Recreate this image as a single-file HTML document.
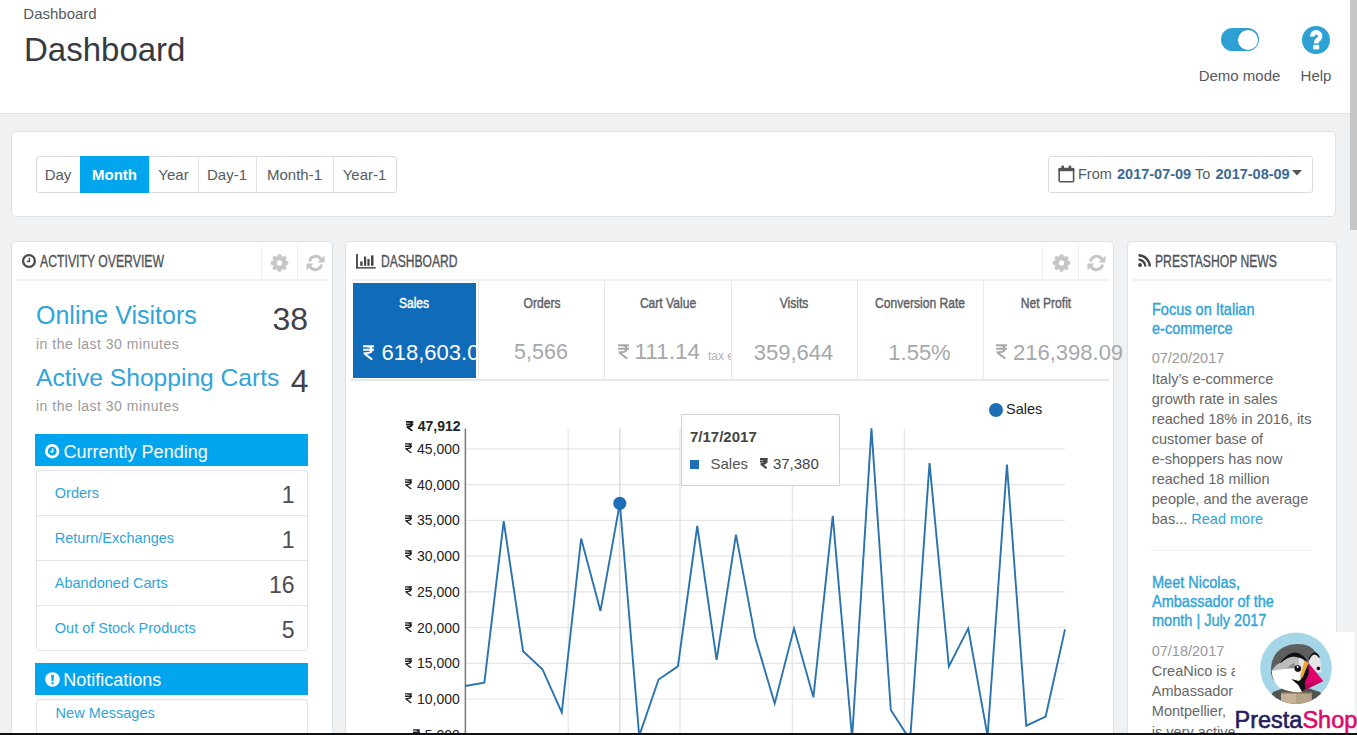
<!DOCTYPE html><html><head><meta charset="utf-8"><style>
*{margin:0;padding:0;box-sizing:border-box}
html,body{width:1357px;height:735px;overflow:hidden;background:#eff1f2;font-family:"Liberation Sans", sans-serif;position:relative}
</style></head><body>
<svg width="0" height="0" style="position:absolute"><defs>
<symbol id="ru" viewBox="0 0 10 14"><path d="M0 1.1H10M0 4.3H10M3 1.1Q7.9 1.1 7.9 4.4Q7.9 7.5 3.2 7.5H0.6M0.9 7.5L8.4 13.3" fill="none" stroke="currentColor" stroke-width="1.8"/></symbol>
<symbol id="rub" viewBox="0 0 10 14"><path d="M0 1.2H10M0 4.4H10M3 1.2Q7.7 1.2 7.7 4.5Q7.7 7.5 3.2 7.5H0.8M1.1 7.5L8.4 13.1" fill="none" stroke="currentColor" stroke-width="2.5"/></symbol>
</defs></svg>
<div style="position:absolute;left:0px;top:0px;width:1350px;height:114px;background:#fff;border-bottom:1px solid #e2e4e7;"></div>
<div style="position:absolute;top:5.90px;font-size:15px;line-height:15px;color:#555a60;font-weight:400;white-space:nowrap;left:23.30px;">Dashboard</div>
<div style="position:absolute;top:33.37px;font-size:33px;line-height:33px;color:#363a41;font-weight:400;white-space:nowrap;left:24.00px;">Dashboard</div>
<div style="position:absolute;left:1221.4px;top:28.2px;width:37.8px;height:23px;background:#2ea1d4;border-radius:11.5px;"></div>
<div style="position:absolute;left:1238px;top:29.8px;width:20px;height:20px;background:#fff;border-radius:50%;"></div>
<div style="position:absolute;top:68.30px;font-size:15px;line-height:15px;color:#555a60;font-weight:400;white-space:nowrap;left:1239.50px;transform:translateX(-50%) scaleX(1.0);transform-origin:50% 0;">Demo mode</div>
<svg style="position:absolute;left:1302px;top:26px;overflow:visible;" width="28" height="28" viewBox="0 0 28 28"><circle cx="14" cy="14" r="14" fill="#2ea1d4"/><path d="M10.4 10.6A3.9 3.9 0 1 1 16.9 13.1Q14.2 14.5 14.2 17.4" fill="none" stroke="#fff" stroke-width="4.5"/><rect x="11.2" y="18.9" width="6" height="4.5" fill="#fff"/></svg>
<div style="position:absolute;top:68.30px;font-size:15px;line-height:15px;color:#555a60;font-weight:400;white-space:nowrap;left:1316.00px;transform:translateX(-50%) scaleX(1.0);transform-origin:50% 0;">Help</div>
<div style="position:absolute;left:11px;top:131px;width:1325px;height:86px;background:#fff;border:1px solid #dfe2e5;border-radius:5px;"></div>
<div style="position:absolute;left:36px;top:156px;width:361px;height:37px;background:#fff;border:1px solid #d9dcdf;border-radius:3px;"></div>
<div style="position:absolute;top:166.80px;font-size:15px;line-height:15px;color:#555a60;font-weight:400;white-space:nowrap;left:58.00px;transform:translateX(-50%) scaleX(1.0);transform-origin:50% 0;">Day</div>
<div style="position:absolute;left:80px;top:156px;width:69px;height:37px;background:#00a5ee;"></div>
<div style="position:absolute;top:166.80px;font-size:15px;line-height:15px;color:#fff;font-weight:700;white-space:nowrap;left:114.50px;transform:translateX(-50%) scaleX(1.0);transform-origin:50% 0;">Month</div>
<div style="position:absolute;left:149px;top:157px;width:1px;height:35px;background:#dfe2e5;"></div>
<div style="position:absolute;top:166.80px;font-size:15px;line-height:15px;color:#555a60;font-weight:400;white-space:nowrap;left:173.50px;transform:translateX(-50%) scaleX(1.0);transform-origin:50% 0;">Year</div>
<div style="position:absolute;left:198px;top:157px;width:1px;height:35px;background:#dfe2e5;"></div>
<div style="position:absolute;top:166.80px;font-size:15px;line-height:15px;color:#555a60;font-weight:400;white-space:nowrap;left:227.00px;transform:translateX(-50%) scaleX(1.0);transform-origin:50% 0;">Day-1</div>
<div style="position:absolute;left:256px;top:157px;width:1px;height:35px;background:#dfe2e5;"></div>
<div style="position:absolute;top:166.80px;font-size:15px;line-height:15px;color:#555a60;font-weight:400;white-space:nowrap;left:294.50px;transform:translateX(-50%) scaleX(1.0);transform-origin:50% 0;">Month-1</div>
<div style="position:absolute;left:333px;top:157px;width:1px;height:35px;background:#dfe2e5;"></div>
<div style="position:absolute;top:166.80px;font-size:15px;line-height:15px;color:#555a60;font-weight:400;white-space:nowrap;left:364.50px;transform:translateX(-50%) scaleX(1.0);transform-origin:50% 0;">Year-1</div>
<div style="position:absolute;left:1048px;top:156px;width:264.5px;height:37px;background:#fff;border:1px solid #d9dcdf;border-radius:3px;"></div>
<svg style="position:absolute;left:1058px;top:165px;overflow:visible;" width="17" height="18" viewBox="0 0 17 18"><rect x="1.2" y="3.6" width="14.4" height="13.2" rx="1" fill="none" stroke="#555" stroke-width="1.6"/><rect x="0.6" y="3" width="15.6" height="3.2" fill="#555"/><rect x="3.4" y="0.4" width="2.6" height="4" rx="1" fill="#555"/><rect x="10.6" y="0.4" width="2.6" height="4" rx="1" fill="#555"/></svg>
<div style="position:absolute;top:167.23px;font-size:14.5px;line-height:14.5px;color:#555a60;font-weight:400;white-space:nowrap;left:1078.00px;">From</div>
<div style="position:absolute;top:167.23px;font-size:14.5px;line-height:14.5px;color:#3a6a92;font-weight:700;white-space:nowrap;left:1117.00px;">2017-07-09</div>
<div style="position:absolute;top:167.23px;font-size:14.5px;line-height:14.5px;color:#555a60;font-weight:400;white-space:nowrap;left:1195.00px;">To</div>
<div style="position:absolute;top:167.23px;font-size:14.5px;line-height:14.5px;color:#3a6a92;font-weight:700;white-space:nowrap;left:1215.50px;">2017-08-09</div>
<svg style="position:absolute;left:1292px;top:170px;overflow:visible;" width="10" height="6" viewBox="0 0 10 6"><path d="M0 0H10L5 5.5Z" fill="#555"/></svg>
<div style="position:absolute;left:11px;top:241px;width:322px;height:520px;background:#fff;border:1px solid #dfe2e5;border-radius:5px;"></div>
<div style="position:absolute;left:345px;top:241px;width:769px;height:520px;background:#fff;border:1px solid #dfe2e5;border-radius:5px;"></div>
<div style="position:absolute;left:1127px;top:241px;width:210px;height:520px;background:#fff;border:1px solid #dfe2e5;border-radius:5px;"></div>
<div style="position:absolute;left:16px;top:279px;width:312px;height:2px;background:#eef0f2;"></div>
<div style="position:absolute;left:261px;top:245px;width:1px;height:35px;background:#eceef0;"></div>
<div style="position:absolute;left:297px;top:245px;width:1px;height:35px;background:#eceef0;"></div>
<svg style="position:absolute;left:270.1px;top:254px;overflow:visible;" width="19" height="18" viewBox="0 0 19 18"><g fill="#c6c6c6"><rect x="7.6" y="0.2" width="3.8" height="17.6" rx="1.3" transform="rotate(0 9.5 9)"/><rect x="7.6" y="0.2" width="3.8" height="17.6" rx="1.3" transform="rotate(45 9.5 9)"/><rect x="7.6" y="0.2" width="3.8" height="17.6" rx="1.3" transform="rotate(90 9.5 9)"/><rect x="7.6" y="0.2" width="3.8" height="17.6" rx="1.3" transform="rotate(135 9.5 9)"/><circle cx="9.5" cy="9" r="6.9"/></g><circle cx="9.5" cy="9" r="2.7" fill="#fff"/></svg>
<svg style="position:absolute;left:305.8px;top:254px;overflow:visible;" width="19" height="18" viewBox="0 0 19 18"><path fill="none" stroke="#c6c6c6" stroke-width="3" d="M3.5 7.5A6.2 6.2 0 0 1 15 5.5M15.5 10.5A6.2 6.2 0 0 1 4 12.5"/><path fill="#c6c6c6" d="M18.5 1.5V8.5H11.5Z"/><path fill="#c6c6c6" d="M0.5 16.5V9.5H7.5Z"/></svg>
<svg style="position:absolute;left:22.2px;top:254.2px;overflow:visible;" width="14" height="14" viewBox="0 0 14 14"><circle cx="7" cy="7" r="5.9" fill="none" stroke="#4a4a4a" stroke-width="2.2"/><path d="M7.4 3.8V7.6H4.8" fill="none" stroke="#4a4a4a" stroke-width="1.5"/></svg>
<div style="position:absolute;top:252.81px;font-size:17px;line-height:17px;color:#4f5359;font-weight:400;white-space:nowrap;left:40.40px;transform:scaleX(0.72);transform-origin:0 0;-webkit-text-stroke:0.35px #4f5359;">ACTIVITY OVERVIEW</div>
<div style="position:absolute;top:303.14px;font-size:25px;line-height:25px;color:#2fa4d9;font-weight:400;white-space:nowrap;left:36.00px;">Online Visitors</div>
<div style="position:absolute;top:302.71px;font-size:32px;line-height:32px;color:#3f4349;font-weight:400;white-space:nowrap;right:1049.00px;">38</div>
<div style="position:absolute;top:337.45px;font-size:14px;line-height:14px;color:#9a9a9a;font-weight:400;white-space:nowrap;letter-spacing:0.5px;left:36.00px;">in the last 30 minutes</div>
<div style="position:absolute;top:365.98px;font-size:24.6px;line-height:24.6px;color:#2fa4d9;font-weight:400;white-space:nowrap;left:36.00px;">Active Shopping Carts</div>
<div style="position:absolute;top:364.61px;font-size:32px;line-height:32px;color:#3f4349;font-weight:400;white-space:nowrap;right:1048.50px;">4</div>
<div style="position:absolute;top:398.65px;font-size:14px;line-height:14px;color:#9a9a9a;font-weight:400;white-space:nowrap;letter-spacing:0.5px;left:36.00px;">in the last 30 minutes</div>
<div style="position:absolute;left:35px;top:434px;width:273px;height:32px;background:#00a5ee;"></div>
<svg style="position:absolute;left:45px;top:444px;overflow:visible;" width="15" height="15" viewBox="0 0 15 15"><circle cx="7.2" cy="7.2" r="5.8" fill="none" stroke="#fff" stroke-width="2.8"/><path d="M7.6 4.6V7.8H5.4" fill="none" stroke="#fff" stroke-width="1.6"/></svg>
<div style="position:absolute;top:442.96px;font-size:18px;line-height:18px;color:#fff;font-weight:400;white-space:nowrap;left:63.60px;">Currently Pending</div>
<div style="position:absolute;left:36px;top:470px;width:272px;height:181px;background:#fff;border:1px solid #e1e3e6;border-radius:3px;"></div>
<div style="position:absolute;left:37px;top:515px;width:270px;height:1px;background:#e3e5e8;"></div>
<div style="position:absolute;left:37px;top:560px;width:270px;height:1px;background:#e3e5e8;"></div>
<div style="position:absolute;left:37px;top:605px;width:270px;height:1px;background:#e3e5e8;"></div>
<div style="position:absolute;top:485.73px;font-size:14.5px;line-height:14.5px;color:#2fa4d9;font-weight:400;white-space:nowrap;left:54.80px;">Orders</div>
<div style="position:absolute;top:484.03px;font-size:23px;line-height:23px;color:#4a4d52;font-weight:400;white-space:nowrap;right:1062.50px;">1</div>
<div style="position:absolute;top:530.73px;font-size:14.5px;line-height:14.5px;color:#2fa4d9;font-weight:400;white-space:nowrap;left:54.80px;">Return/Exchanges</div>
<div style="position:absolute;top:529.03px;font-size:23px;line-height:23px;color:#4a4d52;font-weight:400;white-space:nowrap;right:1062.50px;">1</div>
<div style="position:absolute;top:575.73px;font-size:14.5px;line-height:14.5px;color:#2fa4d9;font-weight:400;white-space:nowrap;left:54.80px;">Abandoned Carts</div>
<div style="position:absolute;top:574.03px;font-size:23px;line-height:23px;color:#4a4d52;font-weight:400;white-space:nowrap;right:1062.50px;">16</div>
<div style="position:absolute;top:621.13px;font-size:14.5px;line-height:14.5px;color:#2fa4d9;font-weight:400;white-space:nowrap;left:54.80px;">Out of Stock Products</div>
<div style="position:absolute;top:619.43px;font-size:23px;line-height:23px;color:#4a4d52;font-weight:400;white-space:nowrap;right:1062.50px;">5</div>
<div style="position:absolute;left:35px;top:663px;width:273px;height:32px;background:#00a5ee;"></div>
<svg style="position:absolute;left:44.5px;top:672px;overflow:visible;" width="15" height="15" viewBox="0 0 15 15"><circle cx="7.5" cy="7.5" r="7.3" fill="#fff"/><path d="M6 3H9L8.4 9.2H6.6Z" fill="#00a5ee"/><rect x="6.5" y="10.1" width="2" height="2.2" fill="#00a5ee"/></svg>
<div style="position:absolute;top:670.76px;font-size:18px;line-height:18px;color:#fff;font-weight:400;white-space:nowrap;left:63.20px;">Notifications</div>
<div style="position:absolute;left:36px;top:699px;width:272px;height:60px;background:#fff;border:1px solid #e1e3e6;border-radius:3px;"></div>
<div style="position:absolute;top:705.73px;font-size:14.5px;line-height:14.5px;color:#2fa4d9;font-weight:400;white-space:nowrap;left:55.60px;">New Messages</div>
<div style="position:absolute;left:351px;top:279px;width:758px;height:2px;background:#eef0f2;"></div>
<div style="position:absolute;left:1042px;top:245px;width:1px;height:35px;background:#eceef0;"></div>
<div style="position:absolute;left:1078px;top:245px;width:1px;height:35px;background:#eceef0;"></div>
<svg style="position:absolute;left:1051.5px;top:254px;overflow:visible;" width="19" height="18" viewBox="0 0 19 18"><g fill="#c6c6c6"><rect x="7.6" y="0.2" width="3.8" height="17.6" rx="1.3" transform="rotate(0 9.5 9)"/><rect x="7.6" y="0.2" width="3.8" height="17.6" rx="1.3" transform="rotate(45 9.5 9)"/><rect x="7.6" y="0.2" width="3.8" height="17.6" rx="1.3" transform="rotate(90 9.5 9)"/><rect x="7.6" y="0.2" width="3.8" height="17.6" rx="1.3" transform="rotate(135 9.5 9)"/><circle cx="9.5" cy="9" r="6.9"/></g><circle cx="9.5" cy="9" r="2.7" fill="#fff"/></svg>
<svg style="position:absolute;left:1086.5px;top:254px;overflow:visible;" width="19" height="18" viewBox="0 0 19 18"><path fill="none" stroke="#c6c6c6" stroke-width="3" d="M3.5 7.5A6.2 6.2 0 0 1 15 5.5M15.5 10.5A6.2 6.2 0 0 1 4 12.5"/><path fill="#c6c6c6" d="M18.5 1.5V8.5H11.5Z"/><path fill="#c6c6c6" d="M0.5 16.5V9.5H7.5Z"/></svg>
<svg style="position:absolute;left:356px;top:254px;overflow:visible;" width="20" height="15" viewBox="0 0 20 15"><rect x="0" y="0" width="2" height="14.6" fill="#555"/><rect x="0" y="13" width="19.7" height="1.6" fill="#555"/><rect x="4.2" y="7.4" width="2.4" height="4.4" fill="#444"/><rect x="8" y="2.6" width="2.2" height="9.2" fill="#444"/><rect x="11.4" y="5" width="2.2" height="6.8" fill="#444"/><rect x="15" y="1.4" width="2.5" height="10.4" fill="#444"/></svg>
<div style="position:absolute;top:252.61px;font-size:17px;line-height:17px;color:#4f5359;font-weight:400;white-space:nowrap;left:380.75px;transform:scaleX(0.71);transform-origin:0 0;-webkit-text-stroke:0.35px #4f5359;">DASHBOARD</div>
<div style="position:absolute;left:351px;top:379px;width:758px;height:2px;background:#e6e8ea;"></div>
<div style="position:absolute;left:478.0px;top:281px;width:1px;height:98px;background:#e6e8ea;"></div>
<div style="position:absolute;left:604.0px;top:281px;width:1px;height:98px;background:#e6e8ea;"></div>
<div style="position:absolute;left:730.5px;top:281px;width:1px;height:98px;background:#e6e8ea;"></div>
<div style="position:absolute;left:856.5px;top:281px;width:1px;height:98px;background:#e6e8ea;"></div>
<div style="position:absolute;left:982.5px;top:281px;width:1px;height:98px;background:#e6e8ea;"></div>
<div style="position:absolute;left:353px;top:283px;width:122.5px;height:94.5px;background:#106cb8;"></div>
<div style="position:absolute;left:353px;top:283px;width:122px;height:95px;overflow:hidden">
</div>
<div style="position:absolute;top:294.68px;font-size:15.5px;line-height:15.5px;color:#fff;font-weight:400;white-space:nowrap;left:414.20px;transform:translateX(-50%) scaleX(0.78);transform-origin:50% 0;-webkit-text-stroke:0.45px #fff;">Sales</div>
<div style="position:absolute;top:294.68px;font-size:15.5px;line-height:15.5px;color:#5d6166;font-weight:400;white-space:nowrap;left:541.50px;transform:translateX(-50%) scaleX(0.78);transform-origin:50% 0;-webkit-text-stroke:0.45px #5d6166;">Orders</div>
<div style="position:absolute;top:294.68px;font-size:15.5px;line-height:15.5px;color:#5d6166;font-weight:400;white-space:nowrap;left:667.75px;transform:translateX(-50%) scaleX(0.78);transform-origin:50% 0;-webkit-text-stroke:0.45px #5d6166;">Cart Value</div>
<div style="position:absolute;top:294.68px;font-size:15.5px;line-height:15.5px;color:#5d6166;font-weight:400;white-space:nowrap;left:794.00px;transform:translateX(-50%) scaleX(0.78);transform-origin:50% 0;-webkit-text-stroke:0.45px #5d6166;">Visits</div>
<div style="position:absolute;top:294.68px;font-size:15.5px;line-height:15.5px;color:#5d6166;font-weight:400;white-space:nowrap;left:920.00px;transform:translateX(-50%) scaleX(0.78);transform-origin:50% 0;-webkit-text-stroke:0.45px #5d6166;">Conversion Rate</div>
<div style="position:absolute;top:294.68px;font-size:15.5px;line-height:15.5px;color:#5d6166;font-weight:400;white-space:nowrap;left:1046.00px;transform:translateX(-50%) scaleX(0.78);transform-origin:50% 0;-webkit-text-stroke:0.45px #5d6166;">Net Profit</div>
<div style="position:absolute;left:353px;top:283px;width:122.5px;height:95px;overflow:hidden">
<svg style="position:absolute;left:10.4px;top:62.2px;color:#fff" width="11" height="15.4" viewBox="0 0 10 14"><use href="#ru"/></svg>
<div style="position:absolute;left:28.5px;top:58.88px;font-size:22px;line-height:22px;color:#fff;white-space:nowrap">618,603.09</div>
</div>
<div style="position:absolute;top:342.30px;font-size:21.5px;line-height:21.5px;color:#a6a8ab;font-weight:400;white-space:nowrap;left:541.00px;transform:translateX(-50%) scaleX(1.0);transform-origin:50% 0;">5,566</div>
<svg style="position:absolute;left:617.80px;top:344.30px;color:#a6a8ab" width="11.00" height="15.40" viewBox="0 0 10 14"><use href="#ru"/></svg>
<div style="position:absolute;top:340.95px;font-size:22.5px;line-height:22.5px;color:#a6a8ab;font-weight:400;white-space:nowrap;left:634.50px;">111.14</div>
<div style="position:absolute;top:349.84px;font-size:12px;line-height:12px;color:#b0b2b5;font-weight:400;white-space:nowrap;left:708.00px;">tax e</div>
<div style="position:absolute;left:731px;top:345px;width:10px;height:20px;background:#fff;"></div>
<div style="position:absolute;left:730.5px;top:345px;width:1px;height:20px;background:#e6e8ea;"></div>
<div style="position:absolute;top:341.88px;font-size:22px;line-height:22px;color:#a6a8ab;font-weight:400;white-space:nowrap;left:793.50px;transform:translateX(-50%) scaleX(1.0);transform-origin:50% 0;">359,644</div>
<div style="position:absolute;top:341.88px;font-size:22px;line-height:22px;color:#a6a8ab;font-weight:400;white-space:nowrap;left:919.50px;transform:translateX(-50%) scaleX(1.0);transform-origin:50% 0;">1.55%</div>
<svg style="position:absolute;left:995.50px;top:344.30px;color:#a6a8ab" width="11.00" height="15.40" viewBox="0 0 10 14"><use href="#ru"/></svg>
<div style="position:absolute;top:341.88px;font-size:22px;line-height:22px;color:#a6a8ab;font-weight:400;white-space:nowrap;left:1013.00px;">216,398.09</div>
<svg style="position:absolute;left:0;top:0" width="1357" height="735" viewBox="0 0 1357 735"><line x1="465" y1="448.9" x2="1065" y2="448.9" stroke="#e5e5e5" stroke-width="1.2"/><line x1="465" y1="484.6" x2="1065" y2="484.6" stroke="#e5e5e5" stroke-width="1.2"/><line x1="465" y1="520.4" x2="1065" y2="520.4" stroke="#e5e5e5" stroke-width="1.2"/><line x1="465" y1="556.1" x2="1065" y2="556.1" stroke="#e5e5e5" stroke-width="1.2"/><line x1="465" y1="591.8" x2="1065" y2="591.8" stroke="#e5e5e5" stroke-width="1.2"/><line x1="465" y1="627.5" x2="1065" y2="627.5" stroke="#e5e5e5" stroke-width="1.2"/><line x1="465" y1="663.3" x2="1065" y2="663.3" stroke="#e5e5e5" stroke-width="1.2"/><line x1="465" y1="699.0" x2="1065" y2="699.0" stroke="#e5e5e5" stroke-width="1.2"/><line x1="465" y1="734.7" x2="1065" y2="734.7" stroke="#e5e5e5" stroke-width="1.2"/><line x1="568.2" y1="428.5" x2="568.2" y2="735" stroke="#e5e5e5" stroke-width="1.2"/><line x1="680" y1="428.5" x2="680" y2="735" stroke="#e5e5e5" stroke-width="1.2"/><line x1="792.3" y1="428.5" x2="792.3" y2="735" stroke="#e5e5e5" stroke-width="1.2"/><line x1="904.3" y1="428.5" x2="904.3" y2="735" stroke="#e5e5e5" stroke-width="1.2"/><line x1="619.8" y1="428.5" x2="619.8" y2="735" stroke="#d6d6d6" stroke-width="1.2"/><line x1="465.4" y1="428.5" x2="465.4" y2="735" stroke="#777" stroke-width="1.5"/><polyline points="465.00,686.00 484.35,682.70 503.71,521.20 523.06,651.20 542.42,669.20 561.77,712.50 581.13,538.60 600.48,610.90 619.84,503.30 639.19,736.00 658.55,679.50 677.90,666.40 697.26,526.00 716.61,659.90 735.97,534.70 755.32,638.10 774.68,703.40 794.03,628.30 813.39,697.30 832.74,515.80 852.10,738.00 871.45,428.40 890.81,710.00 910.16,740.00 929.52,463.10 948.87,666.50 968.23,628.40 987.58,736.00 1006.94,464.60 1026.29,725.70 1045.65,716.50 1065.00,629.40" fill="none" stroke="#2b73ae" stroke-width="1.9" stroke-linejoin="miter"/><circle cx="619.8" cy="503.3" r="6.6" fill="#1f6fb8"/></svg>
<div style="position:absolute;top:441.85px;font-size:14px;line-height:14px;color:#222;font-weight:400;white-space:nowrap;right:897.20px;"><svg width="7.57" height="10.60" viewBox="0 0 10 14" style="display:inline-block;vertical-align:baseline;margin-right:4.5px;margin-bottom:0px;color:#222"><use href="#ru"/></svg>45,000</div>
<div style="position:absolute;top:477.58px;font-size:14px;line-height:14px;color:#222;font-weight:400;white-space:nowrap;right:897.20px;"><svg width="7.57" height="10.60" viewBox="0 0 10 14" style="display:inline-block;vertical-align:baseline;margin-right:4.5px;margin-bottom:0px;color:#222"><use href="#ru"/></svg>40,000</div>
<div style="position:absolute;top:513.31px;font-size:14px;line-height:14px;color:#222;font-weight:400;white-space:nowrap;right:897.20px;"><svg width="7.57" height="10.60" viewBox="0 0 10 14" style="display:inline-block;vertical-align:baseline;margin-right:4.5px;margin-bottom:0px;color:#222"><use href="#ru"/></svg>35,000</div>
<div style="position:absolute;top:549.04px;font-size:14px;line-height:14px;color:#222;font-weight:400;white-space:nowrap;right:897.20px;"><svg width="7.57" height="10.60" viewBox="0 0 10 14" style="display:inline-block;vertical-align:baseline;margin-right:4.5px;margin-bottom:0px;color:#222"><use href="#ru"/></svg>30,000</div>
<div style="position:absolute;top:584.77px;font-size:14px;line-height:14px;color:#222;font-weight:400;white-space:nowrap;right:897.20px;"><svg width="7.57" height="10.60" viewBox="0 0 10 14" style="display:inline-block;vertical-align:baseline;margin-right:4.5px;margin-bottom:0px;color:#222"><use href="#ru"/></svg>25,000</div>
<div style="position:absolute;top:620.50px;font-size:14px;line-height:14px;color:#222;font-weight:400;white-space:nowrap;right:897.20px;"><svg width="7.57" height="10.60" viewBox="0 0 10 14" style="display:inline-block;vertical-align:baseline;margin-right:4.5px;margin-bottom:0px;color:#222"><use href="#ru"/></svg>20,000</div>
<div style="position:absolute;top:656.23px;font-size:14px;line-height:14px;color:#222;font-weight:400;white-space:nowrap;right:897.20px;"><svg width="7.57" height="10.60" viewBox="0 0 10 14" style="display:inline-block;vertical-align:baseline;margin-right:4.5px;margin-bottom:0px;color:#222"><use href="#ru"/></svg>15,000</div>
<div style="position:absolute;top:691.96px;font-size:14px;line-height:14px;color:#222;font-weight:400;white-space:nowrap;right:897.20px;"><svg width="7.57" height="10.60" viewBox="0 0 10 14" style="display:inline-block;vertical-align:baseline;margin-right:4.5px;margin-bottom:0px;color:#222"><use href="#ru"/></svg>10,000</div>
<div style="position:absolute;top:727.69px;font-size:14px;line-height:14px;color:#222;font-weight:400;white-space:nowrap;right:897.20px;"><svg width="7.57" height="10.60" viewBox="0 0 10 14" style="display:inline-block;vertical-align:baseline;margin-right:4.5px;margin-bottom:0px;color:#222"><use href="#ru"/></svg>5,000</div>
<div style="position:absolute;top:419.35px;font-size:14px;line-height:14px;color:#222;font-weight:700;white-space:nowrap;right:896.50px;"><svg width="7.57" height="10.60" viewBox="0 0 10 14" style="display:inline-block;vertical-align:baseline;margin-right:4px;margin-bottom:0px;color:#222"><use href="#rub"/></svg>47,912</div>
<svg style="position:absolute;left:989px;top:403px;overflow:visible;" width="14" height="14" viewBox="0 0 14 14"><circle cx="7" cy="7" r="7" fill="#1f6fb8"/></svg>
<div style="position:absolute;top:401.53px;font-size:14.5px;line-height:14.5px;color:#222;font-weight:400;white-space:nowrap;left:1006.00px;">Sales</div>
<div style="position:absolute;left:680.5px;top:414px;width:159px;height:72px;background:#fff;border:1px solid #d2d2d2;border-radius:1px;"></div>
<div style="position:absolute;top:428.70px;font-size:15px;line-height:15px;color:#444;font-weight:700;white-space:nowrap;left:690.00px;">7/17/2017</div>
<div style="position:absolute;left:690px;top:459.7px;width:9px;height:9px;background:#1f6fb8;"></div>
<div style="position:absolute;top:455.60px;font-size:15px;line-height:15px;color:#555;font-weight:400;white-space:nowrap;left:710.50px;">Sales</div>
<div style="position:absolute;top:455.60px;font-size:15px;line-height:15px;color:#444;font-weight:400;white-space:nowrap;right:538.20px;"><svg width="7.86" height="11.00" viewBox="0 0 10 14" style="display:inline-block;vertical-align:baseline;margin-right:5px;margin-bottom:0px;color:#444"><use href="#rub"/></svg>37,380</div>
<div style="position:absolute;left:1132px;top:279px;width:199px;height:2px;background:#eef0f2;"></div>
<svg style="position:absolute;left:1138px;top:254.3px;overflow:visible;" width="13" height="13" viewBox="0 0 13 13"><circle cx="2" cy="11" r="2" fill="#444"/><path d="M0.5 5.6A7 7 0 0 1 7.4 12.5" fill="none" stroke="#444" stroke-width="2.4"/><path d="M0.5 1.2A11.4 11.4 0 0 1 11.8 12.5" fill="none" stroke="#444" stroke-width="2.4"/></svg>
<div style="position:absolute;top:252.61px;font-size:17px;line-height:17px;color:#4f5359;font-weight:400;white-space:nowrap;left:1155.00px;transform:scaleX(0.716);transform-origin:0 0;-webkit-text-stroke:0.35px #4f5359;">PRESTASHOP NEWS</div>
<div style="position:absolute;top:301.23px;font-size:16.5px;line-height:16.5px;color:#2fa4d9;font-weight:400;white-space:nowrap;left:1151.50px;transform:scaleX(0.88);transform-origin:0 0;-webkit-text-stroke:0.4px #2fa4d9;">Focus on Italian</div>
<div style="position:absolute;top:320.13px;font-size:16.5px;line-height:16.5px;color:#2fa4d9;font-weight:400;white-space:nowrap;left:1151.50px;transform:scaleX(0.88);transform-origin:0 0;-webkit-text-stroke:0.4px #2fa4d9;">e-commerce</div>
<div style="position:absolute;top:350.53px;font-size:14.5px;line-height:14.5px;color:#999;font-weight:400;white-space:nowrap;left:1151.70px;">07/20/2017</div>
<div style="position:absolute;top:371.63px;font-size:14.5px;line-height:14.5px;color:#666;font-weight:400;white-space:nowrap;left:1151.80px;">Italy’s e-commerce</div>
<div style="position:absolute;top:391.75px;font-size:14.5px;line-height:14.5px;color:#666;font-weight:400;white-space:nowrap;left:1151.80px;">growth rate in sales</div>
<div style="position:absolute;top:411.87px;font-size:14.5px;line-height:14.5px;color:#666;font-weight:400;white-space:nowrap;left:1151.80px;">reached 18% in 2016, its</div>
<div style="position:absolute;top:431.99px;font-size:14.5px;line-height:14.5px;color:#666;font-weight:400;white-space:nowrap;left:1151.80px;">customer base of</div>
<div style="position:absolute;top:452.11px;font-size:14.5px;line-height:14.5px;color:#666;font-weight:400;white-space:nowrap;left:1151.80px;">e-shoppers has now</div>
<div style="position:absolute;top:472.23px;font-size:14.5px;line-height:14.5px;color:#666;font-weight:400;white-space:nowrap;left:1151.80px;">reached 18 million</div>
<div style="position:absolute;top:492.35px;font-size:14.5px;line-height:14.5px;color:#666;font-weight:400;white-space:nowrap;left:1151.80px;">people, and the average</div>
<div style="position:absolute;top:512.47px;font-size:14.5px;line-height:14.5px;color:#666;font-weight:400;white-space:nowrap;left:1151.80px;">bas... <span style="color:#2fa4d9">Read more</span></div>
<div style="position:absolute;left:1151px;top:550px;width:161px;height:1px;background:#eceef0;"></div>
<div style="position:absolute;top:573.73px;font-size:16.5px;line-height:16.5px;color:#2fa4d9;font-weight:400;white-space:nowrap;left:1151.50px;transform:scaleX(0.88);transform-origin:0 0;-webkit-text-stroke:0.4px #2fa4d9;">Meet Nicolas,</div>
<div style="position:absolute;top:592.83px;font-size:16.5px;line-height:16.5px;color:#2fa4d9;font-weight:400;white-space:nowrap;left:1151.50px;transform:scaleX(0.88);transform-origin:0 0;-webkit-text-stroke:0.4px #2fa4d9;">Ambassador of the</div>
<div style="position:absolute;top:611.93px;font-size:16.5px;line-height:16.5px;color:#2fa4d9;font-weight:400;white-space:nowrap;left:1151.50px;transform:scaleX(0.88);transform-origin:0 0;-webkit-text-stroke:0.4px #2fa4d9;">month | July 2017</div>
<div style="position:absolute;top:644.33px;font-size:14.5px;line-height:14.5px;color:#999;font-weight:400;white-space:nowrap;left:1151.70px;">07/18/2017</div>
<div style="position:absolute;top:664.23px;font-size:14.5px;line-height:14.5px;color:#666;font-weight:400;white-space:nowrap;left:1151.80px;">CreaNico is a</div>
<div style="position:absolute;top:684.33px;font-size:14.5px;line-height:14.5px;color:#666;font-weight:400;white-space:nowrap;left:1151.80px;">Ambassador</div>
<div style="position:absolute;top:704.43px;font-size:14.5px;line-height:14.5px;color:#666;font-weight:400;white-space:nowrap;left:1151.80px;">Montpellier, </div>
<div style="position:absolute;top:724.53px;font-size:14.5px;line-height:14.5px;color:#666;font-weight:400;white-space:nowrap;left:1151.80px;">is very active in the</div>
<div style="position:absolute;left:1350px;top:0px;width:7px;height:733px;background:#f1f1f1;"></div>
<div style="position:absolute;left:1350px;top:0px;width:7px;height:230px;background:#c5c5c5;"></div>
<div style="position:absolute;left:1235px;top:632px;width:120px;height:101px;background:#fff;"></div>
<svg style="position:absolute;left:1260px;top:632px;overflow:visible;" width="72" height="72" viewBox="0 0 72 72">
<defs><clipPath id="cc"><circle cx="36" cy="36.2" r="35.8"/></clipPath></defs>
<circle cx="36" cy="36.2" r="35.8" fill="#a4d6e7"/>
<g clip-path="url(#cc)">
<path d="M6 74L13 60L24 56L48 56L60 60L68 74Z" fill="#525252"/>
<rect x="21" y="60.5" width="30.5" height="14" fill="#c5b497"/>
<rect x="36" y="60.5" width="15.5" height="14" fill="#b4a386"/>
<rect x="21" y="60" width="30.5" height="1.5" fill="#7f6f59"/>
<path d="M11 41.5Q10 22 24 15Q33 10.5 44 12.5Q55 15 60 27L56 46L46 58L28 60Q13 53 11 41.5Z" fill="#5e5e5e"/>
<path d="M20 31Q27 21 35 20.6Q42 21 47 28.6L45 29.5Q38 24.5 33 24.8Q27 25 21.5 31Z" fill="#111"/>
<path d="M11.5 38.8Q17 31 21.5 30.5Q28 25 33 24.8Q39 25 45 29.5L41 46Q35 37 12 38.8Z" fill="#bcbcbc"/>
<path d="M39 25.5Q43 26.5 45 29L41 46L38.5 40Z" fill="#e4e4e4"/>
<path d="M26.5 36.5L33.5 31L37 36.5Z" fill="#8a8a8a"/>
<path d="M11.8 38.8Q25 36.5 35 36.3Q39 38 41 46L42 60Q30 61 20 56Q12 50 11.8 38.8Z" fill="#fff"/>
<path d="M48.5 30Q51 22 54.5 21Q58.5 21 60 26L61.5 40L50 42Z" fill="#e6e6e6"/>
<path d="M48.5 27Q51 21 54.5 20.5Q58.5 20.5 60 26L58.5 25.2Q56.5 22.5 54.5 22.6Q51.5 23 49.6 27.5Z" fill="#111"/>
<path d="M44.7 28.2L48.5 31.6L42.8 45.3L40.1 46.1Z" fill="#f1a52f"/>
<path d="M48.5 31.6L48.9 42.3L45 50.7L45.8 56.8L42 59.8L38.2 53L31.3 46.9L39 49.1L42.8 45.3Z" fill="#111"/>
<path d="M48.5 30.9L63.3 49.1L45.8 57.5L44.7 50.7L48.9 41.5Z" fill="#e1006b"/>
<path d="M63.3 49.1L45.8 57.5L44.9 52Z" fill="#b8005a"/>
<circle cx="37.8" cy="36.6" r="3.3" fill="#111"/>
<circle cx="37.6" cy="34.9" r="1" fill="#fff"/>
<circle cx="58.4" cy="36.4" r="1.8" fill="#111"/>
</g></svg>
<div style="position:absolute;top:709.11px;font-size:23.5px;line-height:23.5px;color:#241c5a;font-weight:400;white-space:nowrap;left:1234.50px;-webkit-text-stroke:0.6px currentColor;"><span style="color:#251d5c">Presta</span><span style="color:#dd0a6a">Shop</span></div>
<div style="position:absolute;left:0px;top:733px;width:1357px;height:2px;background:#111;"></div>
</body></html>
